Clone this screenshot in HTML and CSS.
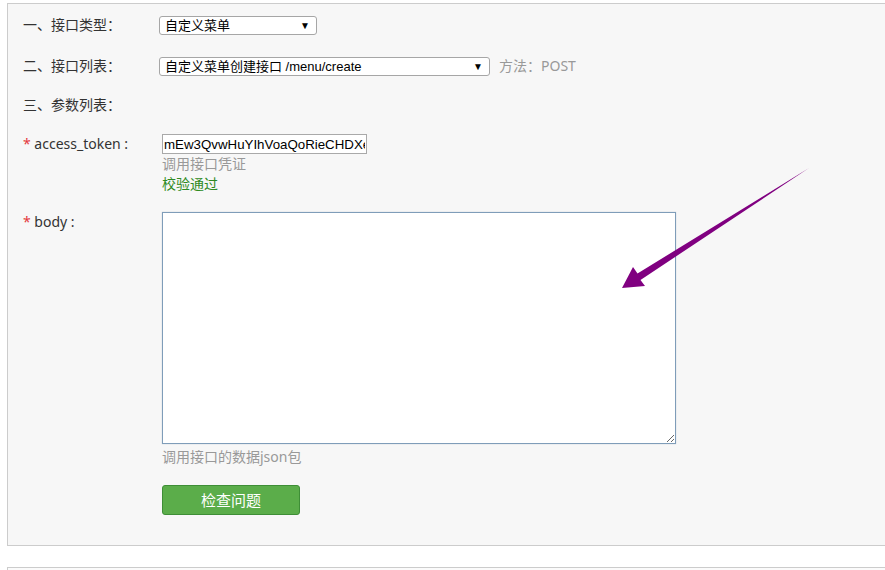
FILE: index.html
```html
<!DOCTYPE html>
<html lang="zh">
<head>
<meta charset="utf-8">
<title>接口调试</title>
<link rel="stylesheet" href="styles.css">
</head>
<body>
<div class="page">
  <div class="panel">
    <div class="row r1">
      <div class="label">一、接口类型：</div>
      <div class="control">
        <div class="select s1"><span class="sel-text">自定义菜单</span><span class="sel-arrow">▼</span></div>
      </div>
    </div>
    <div class="row r2">
      <div class="label">二、接口列表：</div>
      <div class="control inline">
        <div class="select s2"><span class="sel-text">自定义菜单创建接口 /menu/create</span><span class="sel-arrow">▼</span></div>
        <span class="method">方法：POST</span>
      </div>
    </div>
    <div class="row r3">
      <div class="label">三、参数列表：</div>
    </div>
    <div class="row r4">
      <div class="label"><span class="req">*</span> access_token :</div>
      <div class="control stack">
        <input class="text-input" type="text" value="mEw3QvwHuYIhVoaQoRieCHDXeg7kZpLm">
        <div class="hint">调用接口凭证</div>
        <div class="ok">校验通过</div>
      </div>
    </div>
    <div class="row r5">
      <div class="label"><span class="req">*</span> body :</div>
      <div class="control stack">
        <textarea class="body-area"></textarea>
        <div class="hint">调用接口的数据json包</div>
        <button class="btn" type="button">检查问题</button>
      </div>
    </div>
  </div>
  <div class="panel2"></div>
  <svg class="arrow" width="885" height="570" viewBox="0 0 885 570">
    <polygon points="809,168 640.5,280 645,286 622,288 633,267 637.5,273.5" fill="#800080"/>
  </svg>
</div>
</body>
</html>
```
FILE: styles.css
```css
html, body {
  margin: 0;
  padding: 0;
  background: #ffffff;
  overflow: hidden;
}
.page {
  position: relative;
  width: 885px;
  height: 570px;
  overflow: hidden;
  font-family: "Noto Sans", "Noto Sans CJK SC", sans-serif;
  font-size: 14px;
  color: #333333;
}
.panel {
  margin: 3px 0 0 7px;
  width: 900px;
  height: 543px;
  box-sizing: border-box;
  border: 1px solid #cccccc;
  background: #f7f7f7;
  padding: 11px 0 0 15px;
}
.panel2 {
  margin: 21px 0 0 7px;
  width: 900px;
  height: 30px;
  border-top: 1px solid #cccccc;
  border-left: 1px solid #cccccc;
  background: #fbfbfb;
}
.row {
  display: flex;
  align-items: flex-start;
}
.label {
  width: 136px;
  flex: none;
  line-height: 20px;
  height: 20px;
  white-space: nowrap;
}
.req {
  color: #e4393c;
}
.control.inline {
  display: flex;
  align-items: center;
  height: 20px;
}
.control.stack {
  display: flex;
  flex-direction: column;
  align-items: flex-start;
  padding-left: 3px;
}
.r1 { margin-bottom: 21px; }
.r2 { margin-bottom: 19px; }
.r3 { margin-bottom: 19px; }
.r4 { margin-bottom: 18px; }
.select {
  display: flex;
  align-items: center;
  justify-content: space-between;
  box-sizing: border-box;
  height: 19px;
  margin-top: 1px;
  border: 1px solid #a6a6a6;
  border-radius: 3px;
  background: #ffffff;
  padding: 0 6px 0 5px;
  font-family: "Liberation Sans", "Noto Sans CJK SC", sans-serif;
  font-size: 13px;
  color: #000000;
}
.s1 { width: 158px; }
.s2 { width: 331px; }
.sel-text {
  white-space: nowrap;
  line-height: 17px;
}
.sel-arrow {
  font-size: 10px;
  line-height: 17px;
  color: #000000;
}
.method {
  margin-left: 9px;
  color: #999999;
  line-height: 20px;
}
.text-input {
  box-sizing: border-box;
  width: 205px;
  height: 20px;
  margin: 0;
  padding: 0 1px;
  border: 1px solid #a9a9a9;
  background: #ffffff;
  font-family: "Liberation Sans", sans-serif;
  font-size: 13.3px;
  color: #000000;
  outline: none;
}
.hint {
  color: #999999;
  line-height: 20px;
}
.ok {
  color: #2f8a22;
  line-height: 20px;
}
.body-area {
  box-sizing: border-box;
  width: 514px;
  height: 232px;
  margin: 0 0 3px 0;
  padding: 2px;
  border: 1px solid #7f9db9;
  box-shadow: 0 0 1px rgba(127, 157, 185, 0.5);
  background: #ffffff;
  resize: both;
  display: block;
}
.btn {
  margin-top: 18px;
  box-sizing: border-box;
  width: 138px;
  height: 30px;
  padding: 0;
  border: 1px solid #3e8e36;
  border-radius: 3px;
  background: #5bad4a;
  color: #ffffff;
  font-family: "Noto Sans CJK SC", sans-serif;
  font-size: 15px;
  line-height: 28px;
  text-align: center;
}
.arrow {
  position: absolute;
  left: 0;
  top: 0;
  pointer-events: none;
}
```
